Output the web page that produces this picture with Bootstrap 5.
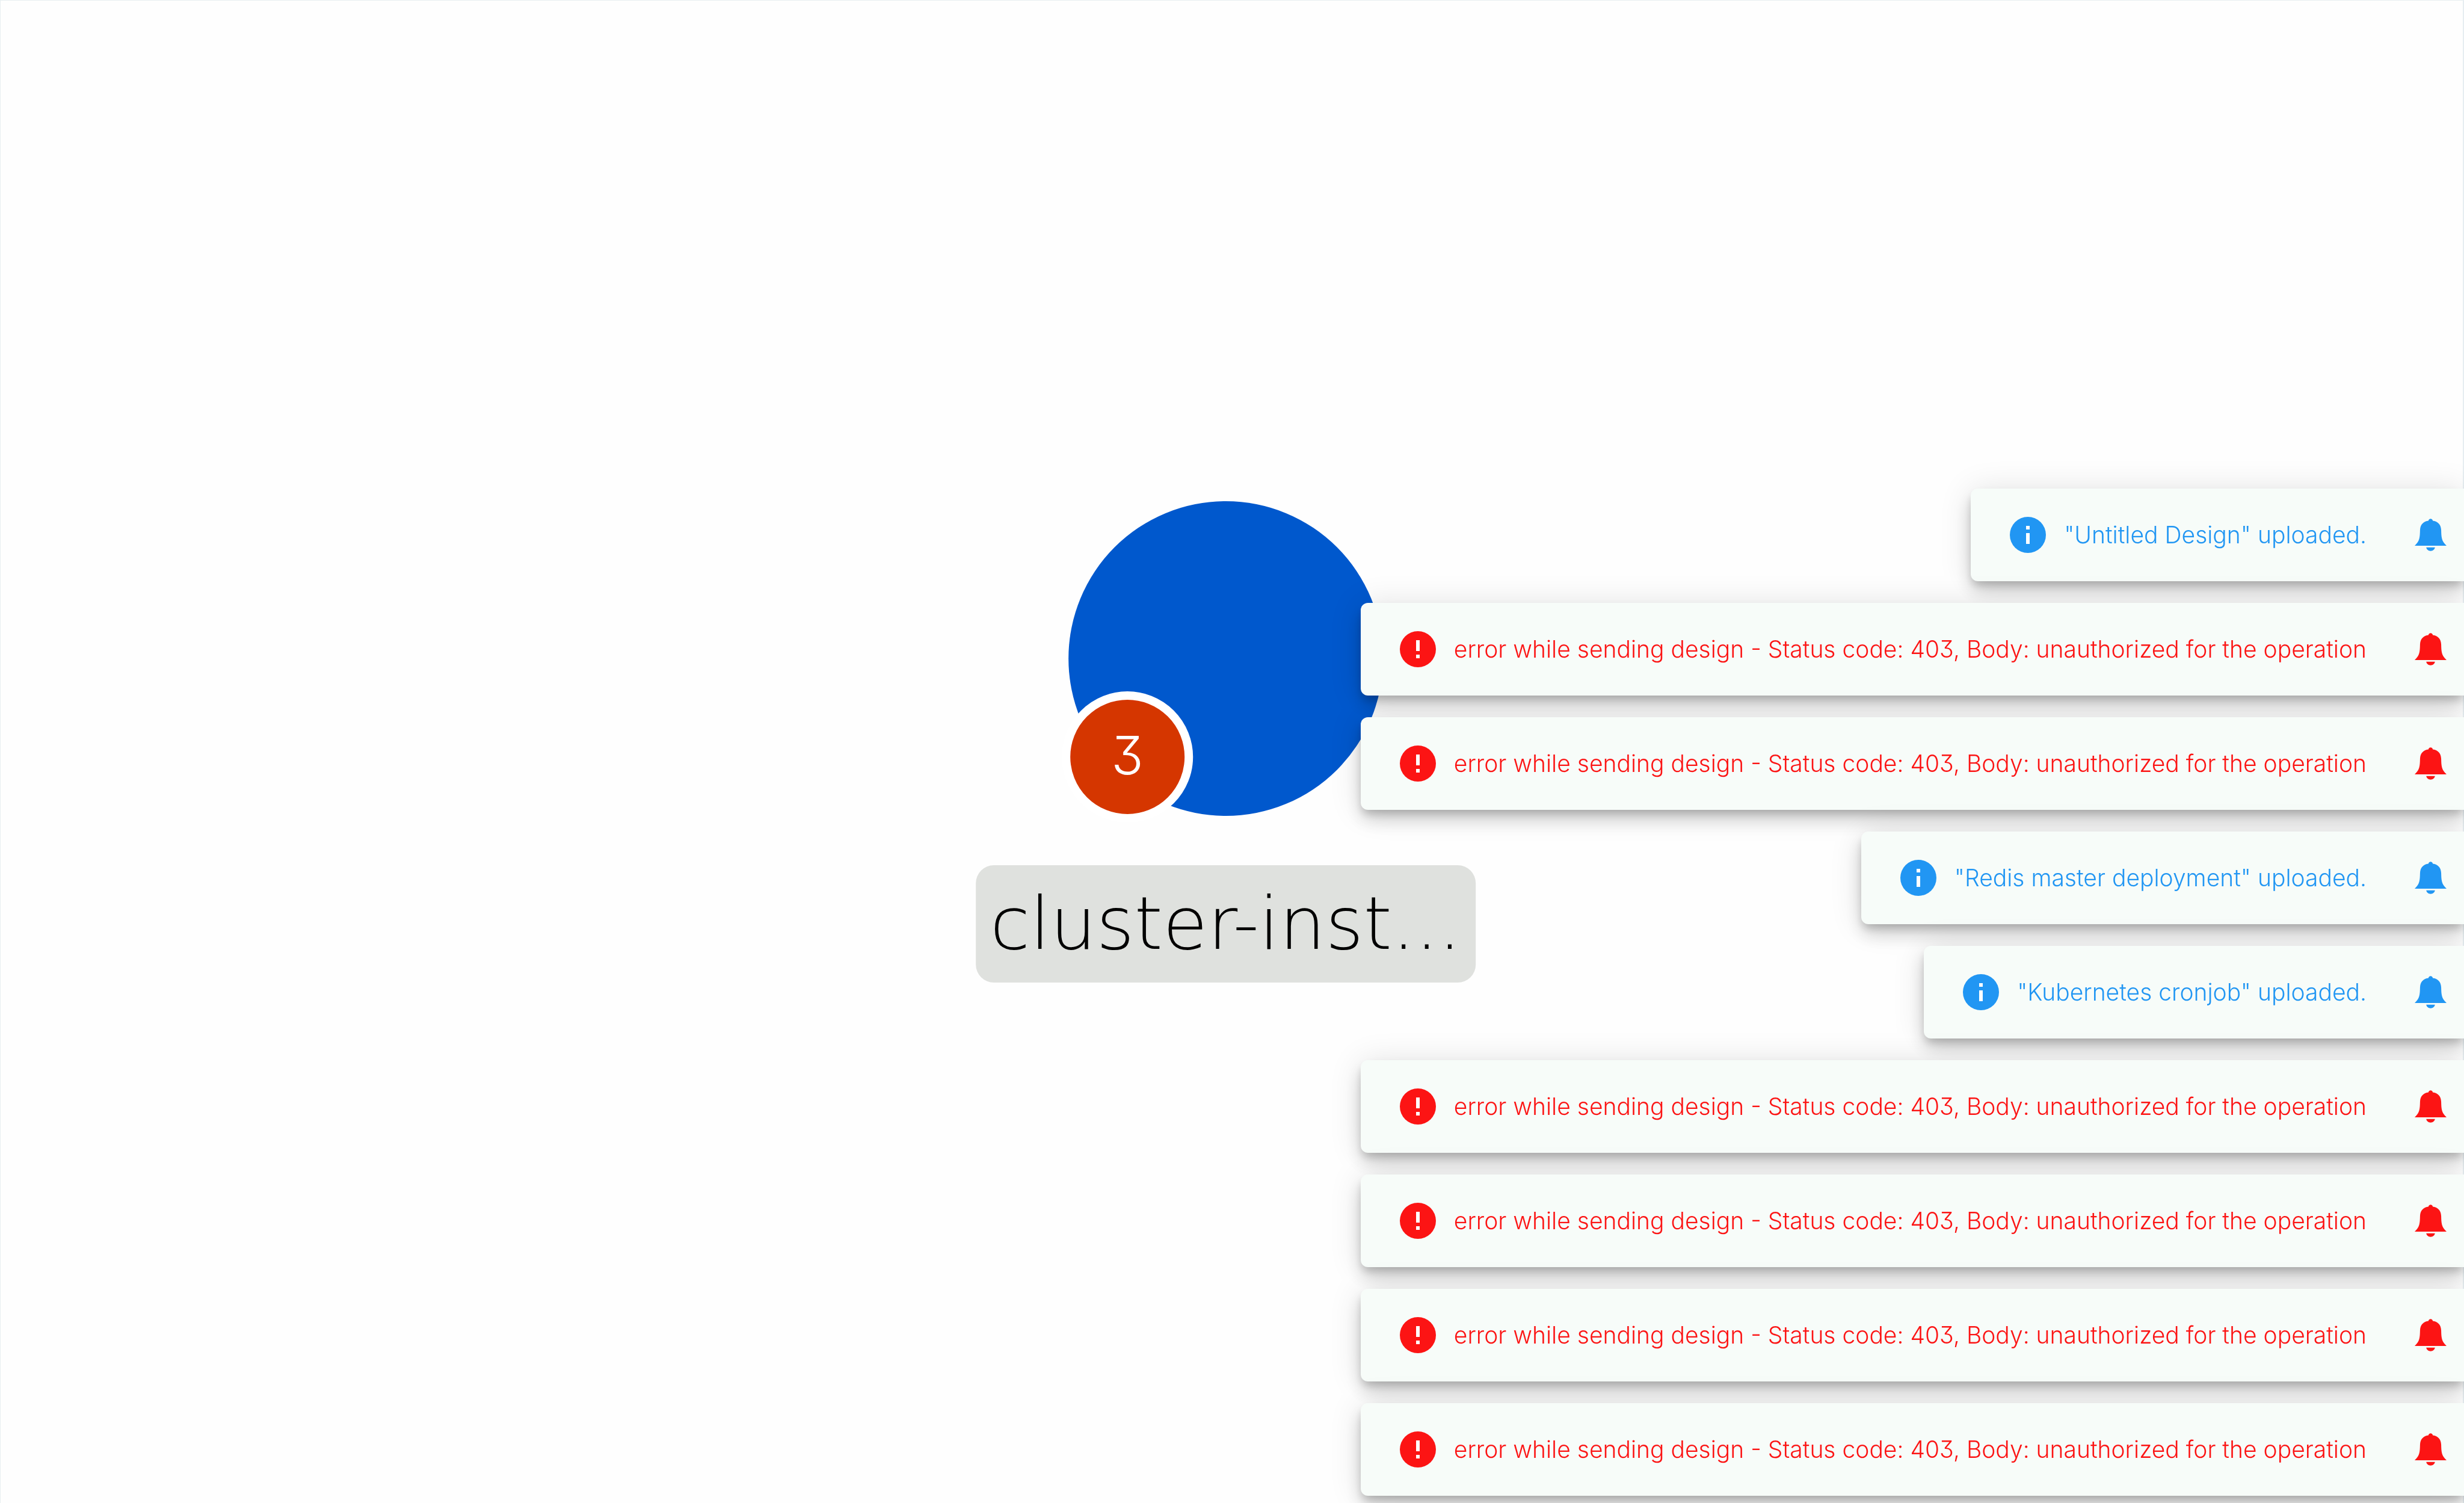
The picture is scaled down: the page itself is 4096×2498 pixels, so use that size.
<!DOCTYPE html>
<html lang="en">
<head>
<meta charset="utf-8">
<meta name="viewport" content="width=device-width, initial-scale=1">
<title>Cluster map</title>
<link href="https://cdn.jsdelivr.net/npm/bootstrap@5.3.0/dist/css/bootstrap.min.css" rel="stylesheet">
<style>
  body { font-family: Inter, "Noto Sans", sans-serif; font-weight: 300; background: #fefefe; }
  .map-canvas { border: 1px solid #e7eef1; border-right-width: 2px; border-bottom: 0; }
  .map-node { left: 50%; top: 832px; margin-left: -10px; gap: 82px; }
  .node-disc { width: 523px; height: 523px; background: #0058cd; }
  .node-count { left: -11px; top: 316px; width: 218px; height: 218px; border: 14px solid #fff; background: #d53600; color: #fff; font-size: 88px; line-height: 1; padding-bottom: 6px; font-feature-settings: "cv09"; }
  .node-name { font-family: "DejaVu Sans", sans-serif; font-weight: 200; font-size: 121px; line-height: 195px; color: #000; background: #dfe1de; border-radius: 30px; padding: 0 24px; }
  .snack-stack { gap: 36px; padding-bottom: 12px; }
  .snack { height: 154px; padding: 0 29px 0 65px; background: #f7fcf9; border-radius: 12px 0 0 12px; font-size: 39px;
    font-feature-settings: "cv09";
    box-shadow: 0 9px 15px -3px rgba(0,0,0,.2), 0 18px 30px 0 rgba(0,0,0,.14), 0 3px 54px 0 rgba(0,0,0,.12); }
  .snack-error { color: #fc1414; }
  .snack-info { color: #2196f3; }
  .snack-icon { width: 60px; height: 60px; margin-right: 30px; }
  .snack-bell { margin-left: 80px; color: inherit; }
  .snack-bell svg { width: 53px; height: 54px; }
</style>
<script src="https://cdn.jsdelivr.net/npm/bootstrap@5.3.0/dist/js/bootstrap.bundle.min.js"></script>
</head>
<body>
<svg class="d-none" aria-hidden="true">
  <symbol id="icon-error" viewBox="0 0 20 20"><path fill="currentColor" d="M10 0a10 10 0 1 0 0 20 10 10 0 0 0 0-20z"/><path fill="#fff" d="M9 5h2v6H9zM9 13h2v2H9z"/></symbol>
  <symbol id="icon-info" viewBox="0 0 20 20"><path fill="currentColor" d="M10 0a10 10 0 1 0 0 20 10 10 0 0 0 0-20z"/><path fill="#fff" d="M9 5h2v2H9zM9 9h2v6H9z"/></symbol>
  <symbol id="icon-bell" viewBox="0 0 160 162"><path fill="currentColor" d="M80 0C86 0 90 4 91 10C116 13 132 29 133 57C134 92 134 113 160 135H0C26 113 26 92 27 57C28 29 44 13 69 10C70 4 74 0 80 0ZM58 144H102C100 155 91 162 80 162S60 155 58 144Z"/></symbol>
</svg>

<main class="map-canvas position-relative vh-100 overflow-hidden">
  <div class="map-node position-absolute translate-middle-x d-flex flex-column align-items-center">
    <div class="node-disc rounded-circle position-relative">
      <span class="node-count position-absolute rounded-circle d-flex align-items-center justify-content-center">3</span>
    </div>
    <div class="node-name text-nowrap">cluster-inst...</div>
  </div>
</main>

<div class="snack-stack position-fixed bottom-0 end-0 d-flex flex-column-reverse align-items-end" id="snacks"></div>

<script>
  const failed = ['error', 'error while sending design - Status code: 403, Body: unauthorized for the operation'];
  // newest first: the stack grows upwards from the bottom edge
  const messages = [
    failed, failed, failed, failed,
    ['info', '"Kubernetes cronjob" uploaded.'],
    ['info', '"Redis master deployment" uploaded.'],
    failed, failed,
    ['info', '"Untitled Design" uploaded.']
  ];
  document.getElementById('snacks').innerHTML = messages.map(([kind, text]) => `
    <div class="snack snack-${kind} d-flex align-items-center text-nowrap" role="alert">
      <svg class="snack-icon flex-shrink-0" aria-hidden="true"><use href="#icon-${kind}"/></svg>
      <span>${text}</span>
      <button type="button" class="snack-bell btn p-0 border-0 d-flex" aria-label="Notifications"><svg aria-hidden="true"><use href="#icon-bell"/></svg></button>
    </div>`).join('');
</script>
</body>
</html>
